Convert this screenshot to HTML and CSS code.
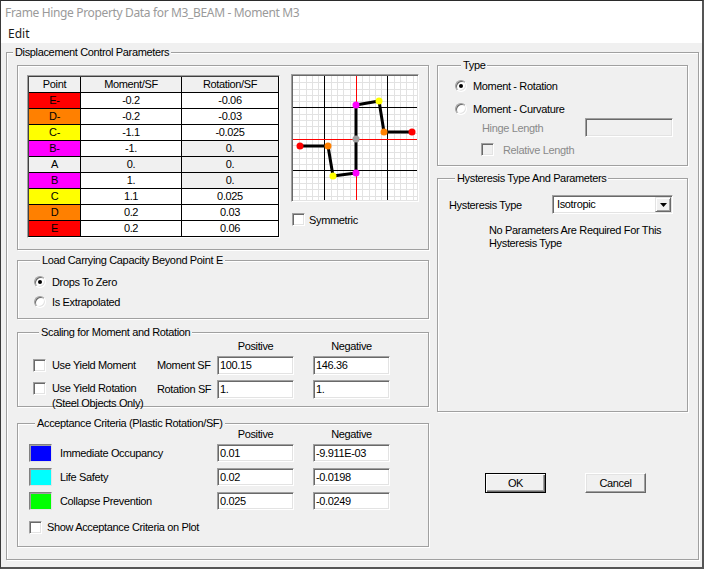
FILE: index.html
```html
<!DOCTYPE html>
<html>
<head>
<meta charset="utf-8">
<link rel="stylesheet" href="styles.css">
</head>
<body>
<div class="window">
  <div class="titlebar">Frame Hinge Property Data for M3_BEAM - Moment M3</div>
  <div class="menubar"><span class="menu-item">Edit</span></div>
  <div class="client">
    <div class="group main">
      <div class="cap">Displacement Control Parameters</div>
      <div class="main-body">
        <div class="col-left">
          <div class="group panel">
            <div class="grid-frame">
              <div class="grid">
                <div class="c hd">Point</div><div class="c hd">Moment/SF</div><div class="c hd">Rotation/SF</div>
                <div class="c red">E-</div><div class="c">-0.2</div><div class="c">-0.06</div>
                <div class="c orange">D-</div><div class="c">-0.2</div><div class="c">-0.03</div>
                <div class="c yellow">C-</div><div class="c">-1.1</div><div class="c">-0.025</div>
                <div class="c magenta">B-</div><div class="c">-1.</div><div class="c ro">0.</div>
                <div class="c ro">A</div><div class="c ro">0.</div><div class="c ro">0.</div>
                <div class="c magenta">B</div><div class="c">1.</div><div class="c ro">0.</div>
                <div class="c yellow">C</div><div class="c">1.1</div><div class="c">0.025</div>
                <div class="c orange">D</div><div class="c">0.2</div><div class="c">0.03</div>
                <div class="c red">E</div><div class="c">0.2</div><div class="c">0.06</div>
              </div>
            </div>
            <div class="chart-col">
              <div class="chart-frame">
                <svg class="chart" width="124" height="124" viewBox="0 0 124 124">
                  <rect width="124" height="124" fill="#fff"/>
                  <path d="M6.5 0V124M13.5 0V124M19.5 0V124M25.5 0V124M38.5 0V124M44.5 0V124M50.5 0V124M57.5 0V124M69.5 0V124M76.5 0V124M82.5 0V124M88.5 0V124M101.5 0V124M107.5 0V124M113.5 0V124M120.5 0V124M0 6.5H124M0 13.5H124M0 19.5H124M0 25.5H124M0 38.5H124M0 44.5H124M0 50.5H124M0 57.5H124M0 69.5H124M0 76.5H124M0 82.5H124M0 88.5H124M0 101.5H124M0 107.5H124M0 113.5H124M0 120.5H124" stroke="#e2e2e2" stroke-width="1" fill="none"/>
                  <path d="M31.5 0V124M94.5 0V124M0 31.5H124M0 94.5H124" stroke="#000" stroke-width="1" fill="none"/>
                  <path d="M63.5 0V124M0 63.5H124" stroke="#f00" stroke-width="1" fill="none"/>
                  <polyline points="7,70 35,70 40,100 63,97 63,63 63,29 86,25 91,56 119,56" fill="none" stroke="#000" stroke-width="3" stroke-linejoin="round"/>
                  <circle cx="7" cy="70" r="3.5" fill="#f00"/>
                  <circle cx="35" cy="70" r="3.5" fill="#ff8000"/>
                  <circle cx="40" cy="100" r="3.5" fill="#ff0"/>
                  <circle cx="63" cy="97" r="3.5" fill="#f0f"/>
                  <circle cx="63" cy="63" r="3.5" fill="#a0a0a0"/>
                  <circle cx="63" cy="29" r="3.5" fill="#f0f"/>
                  <circle cx="86" cy="25" r="3.5" fill="#ff0"/>
                  <circle cx="91" cy="56" r="3.5" fill="#ff8000"/>
                  <circle cx="119" cy="56" r="3.5" fill="#f00"/>
                </svg>
              </div>
              <div class="row sym-row"><span class="check"></span><span class="lbl-sym">Symmetric</span></div>
            </div>
          </div>

          <div class="group load">
            <div class="cap">Load Carrying Capacity Beyond Point E</div>
            <div class="row radio-row first"><span class="radio on"></span><span class="rlabel">Drops To Zero</span></div>
            <div class="row radio-row second"><span class="radio"></span><span class="rlabel">Is Extrapolated</span></div>
          </div>

          <div class="group scaling">
            <div class="cap">Scaling for Moment and Rotation</div>
            <div class="sgrid">
              <div class="hdr pos">Positive</div>
              <div class="hdr neg">Negative</div>
              <div class="chk-cell r1"><span class="check"></span><span class="clabel">Use Yield Moment</span></div>
              <div class="sf r1">Moment SF</div>
              <div class="field r1 p">100.15</div>
              <div class="field r1 n">146.36</div>
              <div class="chk-cell r2"><span class="check"></span><span class="clabel">Use Yield Rotation<br>(Steel Objects Only)</span></div>
              <div class="sf r2">Rotation SF</div>
              <div class="field r2 p">1.</div>
              <div class="field r2 n">1.</div>
            </div>
          </div>

          <div class="group accept">
            <div class="cap">Acceptance Criteria (Plastic Rotation/SF)</div>
            <div class="agrid">
              <div class="hdr pos">Positive</div>
              <div class="hdr neg">Negative</div>
              <div class="swatch blue r1"></div><div class="alabel r1">Immediate Occupancy</div><div class="field fp r1">0.01</div><div class="field fn r1">-9.911E-03</div>
              <div class="swatch cyan r2"></div><div class="alabel r2">Life Safety</div><div class="field fp r2">0.02</div><div class="field fn r2">-0.0198</div>
              <div class="swatch green r3"></div><div class="alabel r3">Collapse Prevention</div><div class="field fp r3">0.025</div><div class="field fn r3">-0.0249</div>
            </div>
            <div class="row show-row"><span class="check"></span><span class="clabel">Show Acceptance Criteria on Plot</span></div>
          </div>
        </div>

        <div class="col-right">
          <div class="group type">
            <div class="cap">Type</div>
            <div class="row radio-row t1"><span class="radio on"></span><span class="rlabel">Moment - Rotation</span></div>
            <div class="row radio-row t2"><span class="radio"></span><span class="rlabel">Moment - Curvature</span></div>
            <div class="row hinge-row"><span class="dis hinge-lbl">Hinge Length</span><span class="field disabled hinge-field"></span></div>
            <div class="row rel-row"><span class="check disabled"></span><span class="dis rel-lbl">Relative Length</span></div>
          </div>
          <div class="group hyst">
            <div class="cap">Hysteresis Type And Parameters</div>
            <div class="row hyst-row">
              <span class="hyst-lbl">Hysteresis Type</span>
              <span class="select"><span class="sel-text">Isotropic</span><span class="sel-btn"><svg width="7" height="4" viewBox="0 0 7 4"><path d="M0 0H7L3.5 4Z" fill="#000"/></svg></span></span>
            </div>
            <div class="note">No Parameters Are Required For This<br>Hysteresis Type</div>
          </div>
          <div class="buttons">
            <div class="btn default">OK</div>
            <div class="btn">Cancel</div>
          </div>
        </div>
      </div>
    </div>
  </div>
</div>
</body>
</html>
```

FILE: styles.css
```css
* { box-sizing: border-box; }
html, body { margin: 0; padding: 0; }
body {
  width: 704px;
  height: 569px;
  overflow: hidden;
  background: #f0f0f0;
  font-family: "Liberation Sans", Arial, sans-serif;
  font-size: 11px;
  letter-spacing: -0.35px;
  color: #000;
}
.window {
  width: 704px;
  height: 569px;
  border-top: 1px solid #2b2b2b;
  border-left: 1px solid #3a3a3a;
  border-right: 2px solid #555;
  border-bottom: 2px solid #555;
  background: #f0f0f0;
  display: flex;
  flex-direction: column;
}
.titlebar {
  height: 22px;
  background: #fff;
  padding: 4px 0 0 4px;
  font-family: "Noto Sans", "Open Sans", sans-serif;
  font-size: 12px;
  line-height: 16px;
  letter-spacing: -0.35px;
  color: #9a9a9a;
}
.menubar {
  height: 20px;
  background: #fff;
  padding: 3px 0 0 7px;
  font-family: "Noto Sans", "Open Sans", sans-serif;
  font-size: 12px;
  line-height: 16px;
  letter-spacing: 0;
  color: #1a1a1a;
}
.client {
  flex: 1;
  padding: 9px 0 0 5px;
}

/* group boxes */
.group {
  border: 1px solid #a0a0a0;
  box-shadow: inset 1px 1px 0 #fff, 1px 1px 0 #fff;
}
.cap {
  display: table;
  height: 13px;
  line-height: 13px;
  margin: -7px 0 0 6px;
  padding: 0 2px;
  background: #f0f0f0;
  white-space: nowrap;
}
.main {
  width: 693px;
  height: 508px;
}
.main-body {
  display: flex;
  gap: 8px;
  margin: 6px 0 0 10px;
}
.col-left {
  width: 412px;
  display: flex;
  flex-direction: column;
}
.col-right {
  width: 251px;
  display: flex;
  flex-direction: column;
}

/* panel with grid + chart */
.panel {
  height: 185px;
  display: flex;
  align-items: flex-start;
  padding: 8px 0 0 9px;
}
.grid-frame {
  margin-top: 1px;
  border: 1px solid;
  border-color: #a0a0a0 #fff #fff #a0a0a0;
}
.grid {
  display: grid;
  grid-template-columns: 51px 100px 96px;
  grid-auto-rows: 15px;
  gap: 1px;
  background: #000;
  border-right: 1px solid #000;
  border-bottom: 1px solid #000;
  border-left: 1px solid #404040;
  border-top: 1px solid #404040;
}
.c {
  background: #fff;
  text-align: center;
  line-height: 15px;
}
.c.hd, .c.ro { background: #f0f0f0; }
.c.red { background: #ff0000; }
.c.orange { background: #ff8000; }
.c.yellow { background: #ffff00; }
.c.magenta { background: #ff00ff; }

.chart-col {
  margin-left: 11px;
  display: flex;
  flex-direction: column;
}
.chart-frame {
  border: 1px solid;
  border-color: #a0a0a0 #fff #fff #a0a0a0;
  box-shadow: inset 1px 1px 0 #696969, inset -1px -1px 0 #e3e3e3;
  padding: 1px;
  width: 128px;
  height: 128px;
}
.chart { display: block; }
.sym-row {
  margin: 11px 0 0 1px;
  height: 13px;
}
.lbl-sym { margin-left: 4px; }

.row {
  display: flex;
  align-items: center;
}

/* controls */
.radio {
  position: relative;
  flex: none;
  width: 12px;
  height: 12px;
  border-radius: 50%;
  background: #fff;
  border: 1px solid;
  border-color: #a0a0a0 #fff #fff #a0a0a0;
  box-shadow: inset 1px 1px 0 #696969, inset -1px -1px 0 #e3e3e3;
}
.radio.on::after {
  content: "";
  position: absolute;
  left: 3px;
  top: 3px;
  width: 4px;
  height: 4px;
  border-radius: 50%;
  background: #000;
}
.rlabel { margin-left: 6px; }
.check {
  flex: none;
  width: 13px;
  height: 13px;
  background: #fff;
  border: 1px solid;
  border-color: #a0a0a0 #fff #fff #a0a0a0;
  box-shadow: inset 1px 1px 0 #696969, inset -1px -1px 0 #e3e3e3;
}
.check.disabled { background: #f0f0f0; }
.clabel { margin-left: 6px; line-height: 13px; }
.field {
  height: 19px;
  background: #fff;
  border: 1px solid;
  border-color: #a0a0a0 #fff #fff #a0a0a0;
  box-shadow: inset 1px 1px 0 #696969, inset -1px -1px 0 #e3e3e3;
  padding: 0 0 0 2px;
  line-height: 17px;
  white-space: nowrap;
}
.field.disabled { background: #f0f0f0; }
.dis { color: #8a8a8a; }

/* load group */
.load {
  margin-top: 10px;
  height: 59px;
  padding-left: 16px;
}
.load .first { margin-top: 8px; height: 14px; }
.load .second { margin-top: 6px; height: 14px; }

/* scaling group */
.scaling {
  margin-top: 13px;
  height: 75px;
  padding-left: 15px;
}
.sgrid {
  display: grid;
  grid-template-columns: 124px 60px 77px 19px 77px;
  grid-template-rows: 13px 19px 21px;
  row-gap: 3px;
  margin-top: 1px;
}
.sgrid .hdr { grid-row: 1; text-align: center; line-height: 13px; }
.sgrid .hdr.pos { grid-column: 3; }
.sgrid .hdr.neg { grid-column: 5; }
.sgrid .r1 { grid-row: 2; }
.sgrid .r2 { grid-row: 3; }
.sgrid .field.r2, .sgrid .sf.r2 { align-self: end; }
.chk-cell { grid-column: 1; display: flex; align-items: flex-start; padding-top: 3px; }
.chk-cell.r2 { padding-top: 4px; }
.chk-cell .clabel { line-height: 15px; margin-top: -1px; }
.sf { grid-column: 2; line-height: 19px; }
.sgrid .field.p { grid-column: 3; }
.sgrid .field.n { grid-column: 5; }

/* acceptance group */
.accept {
  margin-top: 16px;
  height: 124px;
  padding-left: 11px;
}
.agrid {
  display: grid;
  grid-template-columns: 23px 165px 77px 19px 77px;
  grid-template-rows: 10px 18px 18px 18px;
  row-gap: 6px;
  margin-top: -2px;
}
.agrid .hdr { text-align: center; line-height: 13px; height: 13px; grid-row: 1; }
.agrid .hdr.pos { grid-column: 3; }
.agrid .hdr.neg { grid-column: 5; }
.agrid .r1 { grid-row: 2; }
.agrid .r2 { grid-row: 3; }
.agrid .r3 { grid-row: 4; }
.agrid .field { height: 18px; line-height: 16px; }
.agrid .swatch { grid-column: 1; }
.agrid .alabel { grid-column: 2; padding-left: 8px; line-height: 18px; }
.agrid .fp { grid-column: 3; }
.agrid .fn { grid-column: 5; }
.swatch {
  border: 1px solid;
  border-color: #808080 #e3e3e3 #e3e3e3 #808080;
  box-shadow: inset 1px 1px 0 #a0a0a0;
}
.swatch.blue { background: #0000ff; }
.swatch.cyan { background: #00ffff; }
.swatch.green { background: #00ff00; }
.show-row { margin-top: 11px; height: 13px; }
.show-row .clabel { margin-left: 5px; }

/* type group */
.type {
  height: 101px;
  padding-left: 17px;
}
.type .t1 { margin-top: 7px; height: 14px; }
.type .t2 { margin-top: 9px; height: 14px; }
.hinge-row { margin-top: 2px; height: 19px; padding-left: 27px; }
.hinge-lbl { width: 103px; }
.hinge-field { width: 88px; }
.rel-row { margin-top: 6px; height: 13px; padding-left: 26px; }
.rel-lbl { margin-left: 9px; }

/* hysteresis */
.hyst {
  margin-top: 12px;
  height: 234px;
  padding-left: 11px;
}
.hyst-row { margin-top: 10px; height: 19px; }
.hyst-lbl { width: 103px; }
.select {
  width: 121px;
  height: 19px;
  display: flex;
  align-items: center;
  background: #fff;
  border: 1px solid;
  border-color: #a0a0a0 #fff #fff #a0a0a0;
  box-shadow: inset 1px 1px 0 #696969, inset -1px -1px 0 #e3e3e3;
  padding: 1px;
}
.sel-text { flex: 1; padding-left: 3px; line-height: 15px; }
.sel-btn {
  width: 16px;
  height: 15px;
  background: #f0f0f0;
  border: 1px solid;
  border-color: #e3e3e3 #696969 #696969 #e3e3e3;
  box-shadow: inset 1px 1px 0 #fff, inset -1px -1px 0 #a0a0a0;
  display: flex;
  align-items: center;
  justify-content: center;
}
.sel-btn svg { display: block; }
.note {
  margin: 10px 0 0 40px;
  line-height: 13px;
}

/* buttons */
.buttons {
  display: flex;
  gap: 39px;
  margin: 61px 0 0 48px;
}
.btn {
  width: 61px;
  height: 20px;
  background: #f0f0f0;
  border: 1px solid;
  border-color: #fff #696969 #696969 #fff;
  box-shadow: inset -1px -1px 0 #a0a0a0, inset 1px 1px 0 #e3e3e3;
  text-align: center;
  line-height: 18px;
}
.btn.default {
  border-color: #000;
  box-shadow: inset 1px 1px 0 #fff, inset -1px -1px 0 #696969, inset -2px -2px 0 #a0a0a0;
}
```
